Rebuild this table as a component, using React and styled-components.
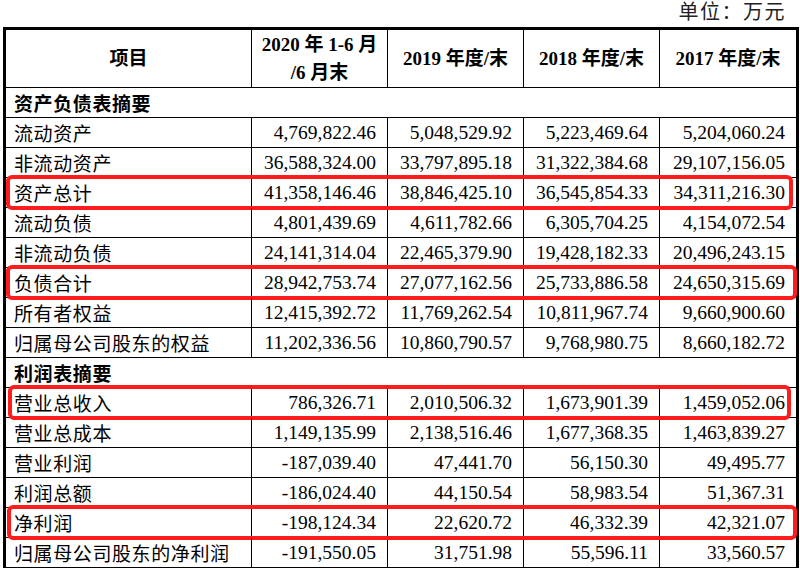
import styled, { createGlobalStyle } from "styled-components";

const GlobalStyle = createGlobalStyle`
  html, body {
    margin: 0;
    padding: 0;
    background: #fff;
  }
  body {
    font-family: "Liberation Serif", "Noto Sans CJK SC", serif;
    color: #000;
  }
`;

const Page = styled.div`
  width: 800px;
  height: 568px;
  overflow: hidden;
`;

const UnitLine = styled.div`
  height: 27px;
  display: flex;
  align-items: flex-start;
  justify-content: flex-end;
  padding-right: 14px;
  font-size: 20px;
  line-height: 24px;
  letter-spacing: 1.5px;
  color: #222;
`;

const Frame = styled.div`
  margin-left: 3px;
  width: 796px;
  box-sizing: border-box;
  border: 3px solid #000;
  border-bottom: none;
`;

const Table = styled.table`
  width: 790px;
  table-layout: fixed;
  border-collapse: separate;
  border-spacing: 0;
`;

const HeadCell = styled.th`
  height: 58px;
  box-sizing: border-box;
  padding: 0;
  border-right: 1px solid #000;
  border-bottom: 1px solid #000;
  font-size: 19px;
  font-weight: bold;
  line-height: 28px;
  text-align: center;
  &:last-child {
    border-right: none;
  }
`;

const SectionCell = styled.td`
  height: 30px;
  box-sizing: border-box;
  padding: 0 0 0 8px;
  border-bottom: 1px solid #000;
  font-size: 19px;
  font-weight: bold;
  letter-spacing: 0.6px;
  text-align: left;
`;

const LabelCell = styled.td`
  position: relative;
  height: 30px;
  box-sizing: border-box;
  padding: 0 0 0 8px;
  border-right: 1px solid #000;
  border-bottom: 1px solid #000;
  font-size: 19px;
  letter-spacing: 0.6px;
  white-space: nowrap;
  text-align: left;
`;

const NumCell = styled.td`
  height: 30px;
  box-sizing: border-box;
  padding: 0 11px 0 0;
  border-right: 1px solid #000;
  border-bottom: 1px solid #000;
  font-size: 19.5px;
  white-space: nowrap;
  text-align: right;
  &:last-child {
    border-right: none;
  }
`;

// red annotation frame drawn over a whole row
const Highlight = styled.span`
  position: absolute;
  top: -3px;
  left: ${(p) => p.$left}px;
  width: ${(p) => p.$width}px;
  height: 35px;
  box-sizing: border-box;
  border: 4px solid #ff1c1c;
  border-radius: 6px;
  pointer-events: none;
`;

const rows = [
  { section: "资产负债表摘要" },
  { label: "流动资产", values: ["4,769,822.46", "5,048,529.92", "5,223,469.64", "5,204,060.24"] },
  { label: "非流动资产", values: ["36,588,324.00", "33,797,895.18", "31,322,384.68", "29,107,156.05"] },
  { label: "资产总计", values: ["41,358,146.46", "38,846,425.10", "36,545,854.33", "34,311,216.30"], box: [0, 787] },
  { label: "流动负债", values: ["4,801,439.69", "4,611,782.66", "6,305,704.25", "4,154,072.54"] },
  { label: "非流动负债", values: ["24,141,314.04", "22,465,379.90", "19,428,182.33", "20,496,243.15"] },
  { label: "负债合计", values: ["28,942,753.74", "27,077,162.56", "25,733,886.58", "24,650,315.69"], box: [0, 791] },
  { label: "所有者权益", values: ["12,415,392.72", "11,769,262.54", "10,811,967.74", "9,660,900.60"] },
  { label: "归属母公司股东的权益", values: ["11,202,336.56", "10,860,790.57", "9,768,980.75", "8,660,182.72"] },
  { section: "利润表摘要" },
  { label: "营业总收入", values: ["786,326.71", "2,010,506.32", "1,673,901.39", "1,459,052.06"], box: [2, 783] },
  { label: "营业总成本", values: ["1,149,135.99", "2,138,516.46", "1,677,368.35", "1,463,839.27"] },
  { label: "营业利润", values: ["-187,039.40", "47,441.70", "56,150.30", "49,495.77"] },
  { label: "利润总额", values: ["-186,024.40", "44,150.54", "58,983.54", "51,367.31"] },
  { label: "净利润", values: ["-198,124.34", "22,620.72", "46,332.39", "42,321.07"], box: [1, 790] },
  { label: "归属母公司股东的净利润", values: ["-191,550.05", "31,751.98", "55,596.11", "33,560.57"] },
];

const App = () => {
  return (
    <Page>
      <GlobalStyle />
      <UnitLine>单位：万元</UnitLine>
      <Frame>
        <Table>
          <colgroup>
            <col style={{ width: 246 }} />
            <col style={{ width: 136 }} />
            <col style={{ width: 136 }} />
            <col style={{ width: 136 }} />
            <col style={{ width: 136 }} />
          </colgroup>
          <thead>
            <tr>
              <HeadCell>项目</HeadCell>
              <HeadCell>
                2020 年 1-6 月
                <br />
                /6 月末
              </HeadCell>
              <HeadCell>2019 年度/末</HeadCell>
              <HeadCell>2018 年度/末</HeadCell>
              <HeadCell>2017 年度/末</HeadCell>
            </tr>
          </thead>
          <tbody>
            {rows.map((row, i) =>
              row.section ? (
                <tr key={i}>
                  <SectionCell colSpan={5}>{row.section}</SectionCell>
                </tr>
              ) : (
                <tr key={i}>
                  <LabelCell>
                    {row.label}
                    {row.box && <Highlight $left={row.box[0]} $width={row.box[1]} />}
                  </LabelCell>
                  {row.values.map((v, j) => (
                    <NumCell key={j}>{v}</NumCell>
                  ))}
                </tr>
              )
            )}
          </tbody>
        </Table>
      </Frame>
    </Page>
  );
};

export default App;
